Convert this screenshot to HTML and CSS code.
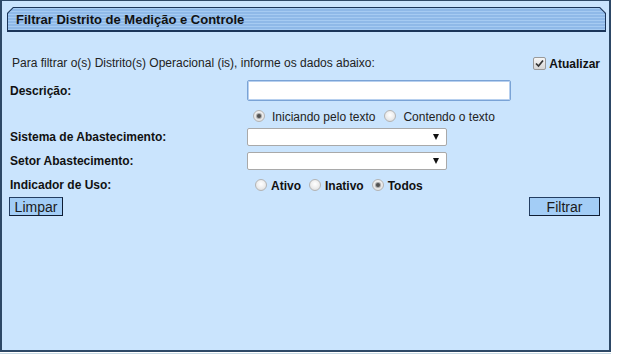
FILE: index.html
```html
<!DOCTYPE html>
<html lang="pt-BR">
<head>
<meta charset="UTF-8" />
<title>Filtrar Distrito de Medição e Controle</title>
<link rel="stylesheet" href="styles.css">
</head>
<body>
<div class="panel">
  <!-- Cabeçalho -->
  <div class="panel-header">
    <div class="panel-header-inner">Filtrar Distrito de Medição e Controle</div>
  </div>

  <div class="panel-body">
    <div class="row info-row">
      <span class="info">Para filtrar o(s) Distrito(s) Operacional (is), informe os dados abaixo:</span>
      <label class="check-label">
        <span class="checkbox">
          <svg width="9" height="9" viewBox="0 0 9 9"><path d="M1 4.5 L3.5 7 L8 1.5" fill="none" stroke="#333" stroke-width="1.7"/></svg>
        </span>
        Atualizar
      </label>
    </div>

    <div class="row desc-row">
      <span class="label">Descrição:</span>
      <input type="text" class="text-input" />
    </div>

    <div class="row radio-row">
      <span class="label"></span>
      <span class="radio checked"></span><span class="radio-text">Iniciando pelo texto</span>
      <span class="radio"></span><span class="radio-text">Contendo o texto</span>
    </div>

    <div class="row select-row first">
      <span class="label">Sistema de Abastecimento:</span>
      <div class="select"><span class="arrow"></span></div>
    </div>

    <div class="row select-row">
      <span class="label">Setor Abastecimento:</span>
      <div class="select"><span class="arrow"></span></div>
    </div>

    <div class="row uso-row">
      <span class="label">Indicador de Uso:</span>
      <span class="radio"></span><span class="uso-text">Ativo</span>
      <span class="radio"></span><span class="uso-text">Inativo</span>
      <span class="radio checked"></span><span class="uso-text">Todos</span>
    </div>

    <div class="row button-row">
      <button class="btn">Limpar</button>
      <button class="btn btn-filtrar">Filtrar</button>
    </div>
  </div>
</div>
<div class="page-bottom"></div>
</body>
</html>
```

FILE: styles.css
```css
* {
  box-sizing: border-box;
  margin: 0;
  padding: 0;
}
body {
  background: #fff;
  font-family: "Liberation Sans", Arial, sans-serif;
  color: #111;
}
.panel {
  width: 611px;
  height: 352px;
  background: #cae4fd;
  border: 2px solid #2d4866;
  border-top-width: 1px;
  padding-top: 6px;
}
.panel-header {
  width: 599px;
  height: 25px;
  margin-left: 5px;
  padding: 1px 1px 2px 1px;
  background: #1b3559;
  clip-path: polygon(6px 0, calc(100% - 6px) 0, 100% 6px, 100% 100%, 0 100%, 0 6px);
}
.panel-header-inner {
  height: 100%;
  padding-left: 8px;
  display: flex;
  align-items: center;
  font-size: 13px;
  font-weight: bold;
  color: #111;
  background: repeating-linear-gradient(#a6cbf2 0 1px, #8fb9e8 1px 3px);
  clip-path: polygon(5.5px 0, calc(100% - 5.5px) 0, 100% 5.5px, 100% 100%, 0 100%, 0 5.5px);
}
.panel-body {
  padding: 0 8px;
  font-size: 12px;
}
.row {
  display: flex;
  align-items: center;
}
.label {
  width: 237px;
  flex-shrink: 0;
  font-weight: bold;
}
.info-row {
  margin-top: 22px;
  height: 16px;
  padding-left: 2px;
}
.info {
  flex: 1;
  color: #222;
  padding-top: 1px;
}
.check-label {
  display: flex;
  align-items: center;
  font-weight: bold;
  margin-right: 1px;
  padding-top: 3px;
}
.checkbox {
  width: 13px;
  height: 13px;
  margin-right: 3px;
  border: 1px solid #9a9a9a;
  border-radius: 2px;
  background: linear-gradient(#f6f6f6, #d6d6d6);
  display: flex;
  align-items: center;
  justify-content: center;
}
.desc-row {
  margin-top: 10px;
  height: 21px;
}
.text-input {
  width: 264px;
  height: 21px;
  border: 1px solid #7aa3d6;
  border-radius: 2px;
  background: #fff;
  box-shadow: inset 0 0 0 1px #b7d0ef;
}
.radio {
  width: 12px;
  height: 12px;
  border-radius: 50%;
  border: 1px solid #b4b4b4;
  background: radial-gradient(circle at 50% 40%, #fff 0, #ececec 55%, #d4d4d4 100%);
  flex-shrink: 0;
  position: relative;
}
.radio.checked::after {
  content: "";
  position: absolute;
  left: 3px;
  top: 3px;
  width: 4px;
  height: 4px;
  border-radius: 50%;
  background: #505050;
  box-shadow: 0 0 1px 1px #a0a0a0;
}
.radio-row {
  margin-top: 8px;
  height: 14px;
}
.radio-row .radio {
  margin-left: 6px;
}
.radio-row .radio-text {
  margin-left: 7px;
  margin-right: 3px;
  color: #222;
  padding-top: 1px;
}
.select-row {
  margin-top: 6px;
  height: 18px;
}
.select-row.first {
  margin-top: 5px;
}
.select {
  width: 200px;
  height: 18px;
  background: #fff;
  border: 1px solid #a9a9a9;
  border-radius: 2px;
  display: flex;
  align-items: center;
  justify-content: flex-end;
  padding-right: 7px;
}
.arrow {
  width: 0;
  height: 0;
  border-left: 3px solid transparent;
  border-right: 3px solid transparent;
  border-top: 6px solid #111;
}
.uso-row {
  margin-top: 7px;
  height: 16px;
}
.uso-row .radio {
  margin-left: 8px;
}
.uso-row .radio:first-of-type {
  margin-left: 5px;
}
.uso-text {
  margin-left: 4px;
  font-weight: bold;
  padding-top: 2px;
}
.button-row {
  margin-top: 4px;
  height: 19px;
  justify-content: space-between;
  margin-left: -1px;
}
.btn {
  height: 19px;
  width: 54px;
  font-family: "Liberation Sans", Arial, sans-serif;
  font-size: 14px;
  color: #1a1a1a;
  background: #a3cdf6;
  border: 1px solid #243e62;
  border-right-color: #0f1d33;
  border-bottom-color: #0f1d33;
}
.btn-filtrar {
  width: 71px;
  margin-right: 1px;
}
.page-bottom {
  width: 611px;
  height: 1px;
  margin-top: 1px;
  background: #c9dbe5;
}
```
